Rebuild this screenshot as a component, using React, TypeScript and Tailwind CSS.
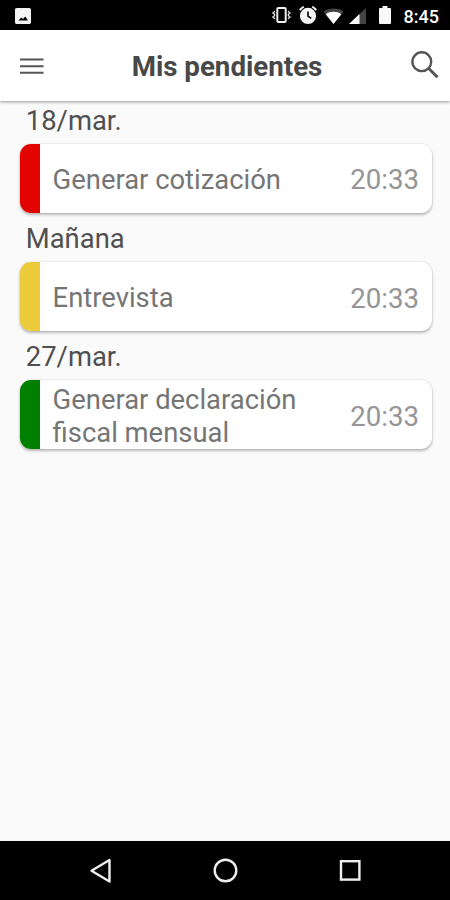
import React from 'react'

interface Task {
  day: string
  title: string
  time: string
  color: string
}

const tasks: Task[] = [
  { day: '18/mar.', title: 'Generar cotización', time: '20:33', color: 'bg-[#e30400]' },
  { day: 'Mañana', title: 'Entrevista', time: '20:33', color: 'bg-[#ebcb3b]' },
  { day: '27/mar.', title: 'Generar declaración fiscal mensual', time: '20:33', color: 'bg-[#008000]' },
]

const StatusBar: React.FC = () => {
  return (
    <div className="flex h-[30px] shrink-0 items-center bg-black pl-[15px] pr-[11px] text-white">
      <svg className="mt-px h-[16px] w-[16px]" viewBox="3 3 18 18" fill="#f5f5f5">
        <path d="M21 19V5c0-1.1-.9-2-2-2H5c-1.1 0-2 .9-2 2v14c0 1.1.9 2 2 2h14c1.100 0 2-.9 2-2zM7 17l3-3.300 2 1.600 2.600-2.700 3 4.400z" />
      </svg>
      <div className="ml-auto flex items-center">
        {/* Vibrate */}
        <svg className="h-[18px] w-[20px]" viewBox="0 0 20 18" fill="none" stroke="#eee">
          <rect x="5.300" y="2" width="8.400" height="14" rx="1" strokeWidth="2" />
          <path d="M2.800 5l-1.300 2 1.300 2-1.300 2 1.300 2M16.200 5l1.300 2-1.300 2 1.300 2-1.300 2" strokeWidth="1.300" />
          <path d="M.5 6.500v1M.5 10.500v1M18.800 6.500v1M18.800 10.500v1" strokeWidth="1" />
        </svg>
        {/* Alarm */}
        <svg className="ml-[7px] h-[18px] w-[18px]" viewBox="2 2 20 20" fill="#f5f5f5">
          <path d="M22 5.700l-4.600-3.900-1.300 1.500 4.600 3.900zM7.900 3.400L6.600 1.900 2 5.700l1.300 1.500z" />
          <circle cx="12" cy="13" r="9" />
          <path d="M12 8v5.300l3.600 2.400" fill="none" stroke="#000" strokeWidth="1.800" />
        </svg>
        {/* Wifi */}
        <svg className="ml-[6px] mt-px h-[16px] w-[21px]" viewBox="0 0 21 16">
          <path d="M10.500 16L.5 3.700C6 -.6 15 -.6 20.500 3.700z" fill="#444" />
          <path d="M10.500 16L2.700 6.200C7 3 14 3 18.300 6.200z" fill="#fff" />
        </svg>
        {/* Signal */}
        <svg className="ml-[5px] mt-px h-[16px] w-[17px]" viewBox="0 0 17 16">
          <path d="M0 16L17 0v16z" fill="#444" />
          <path d="M0 16L10.500 6v10z" fill="#fff" />
        </svg>
        {/* Battery */}
        <svg className="ml-[13px] h-[18px] w-[12px]" viewBox="0 0 12 18" fill="#f8f8f8">
          <path d="M3.500 0h5v2H11q1 0 1 1v14q0 1-1 1H1q-1 0-1-1V3q0-1 1-1h2.500z" />
        </svg>
        <span className="ml-[13px] mt-[3px] text-[18px] font-medium leading-none">8:45</span>
      </div>
    </div>
  )
}

const Header: React.FC = () => {
  return (
    <header className="z-10 flex h-[70.500px] shrink-0 items-center justify-between bg-white pl-[20px] pr-[11px] pt-px shadow-[0_1px_3px_rgba(0,0,0,0.4)]">
      <svg className="h-[18px] w-[24px]" viewBox="0 0 24 18" stroke="#555" strokeWidth="2">
        <path d="M0 2.500h23.500M0 9.200h23.500M0 15.800h23.500" />
      </svg>
      <h1 className="mr-[1px] mt-[3px] text-[27.700px] font-bold text-[#484848]">Mis pendientes</h1>
      <svg className="mb-[1px] h-[28px] w-[28px]" viewBox="0 0 28 28" fill="none" stroke="#555">
        <circle cx="10.800" cy="10.700" r="9.400" strokeWidth="2.400" />
        <path d="M17.500 17.300L26.500 26.300" strokeWidth="3" />
      </svg>
    </header>
  )
}

const TaskItem: React.FC<{ task: Task }> = ({ task }) => {
  return (
    <section className="h-[118.300px]">
      <h2 className="flex h-[43px] items-center pb-[1.600px] pl-[6.300px] text-[27.400px] text-[#505050]">{task.day}</h2>
      <div className="flex h-[69px] overflow-hidden rounded-[11px] bg-white shadow-[0_2px_3px_rgba(0,0,0,0.25),0_0_2px_rgba(0,0,0,0.15)]">
        <div className={`w-[20.300px] shrink-0 ${task.color}`} />
        <div className="flex flex-1 items-center pl-[12.800px] pr-[13px] pt-[4px]">
          <p className="w-[270px] text-[27.400px] leading-[32.500px] text-[#757575]">{task.title}</p>
          <span className="ml-auto text-[27.600px] text-[#959595]">{task.time}</span>
        </div>
      </div>
    </section>
  )
}

const NavBar: React.FC = () => {
  return (
    <nav className="flex h-[59.500px] shrink-0 items-center justify-between bg-black pl-[89px] pr-[88px]">
      <svg className="h-[26px] w-[24px]" viewBox="0 0 24 26" fill="none" stroke="#eee" strokeWidth="2.400" strokeLinejoin="round">
        <path d="M20.500 3v21.500L2.500 13.700z" />
      </svg>
      <svg className="h-[26px] w-[26px]" viewBox="0 0 26 26" fill="none" stroke="#eee" strokeWidth="2.400">
        <circle cx="12.500" cy="13.500" r="10.800" />
      </svg>
      <svg className="h-[24px] w-[24px]" viewBox="0 0 24 24" fill="none" stroke="#eee" strokeWidth="2.400">
        <rect x="3" y="3.200" width="18.400" height="18.400" />
      </svg>
    </nav>
  )
}

const App: React.FC = () => {
  return (
    <div className="flex h-[900px] w-[450px] flex-col overflow-hidden bg-[#fafafa] font-['Roboto','Liberation_Sans',sans-serif]">
      <StatusBar />
      <Header />
      <main className="flex-1 pl-[19.500px] pr-[18px]">
        {tasks.map((task) => (
          <TaskItem key={task.day} task={task} />
        ))}
      </main>
      <NavBar />
    </div>
  )
}

export default App
